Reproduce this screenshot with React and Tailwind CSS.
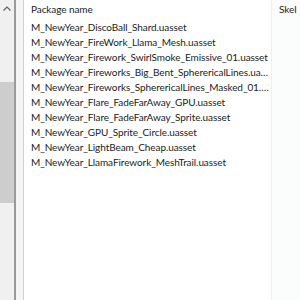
const rows = [
  "M_NewYear_DiscoBall_Shard.uasset",
  "M_NewYear_FireWork_Llama_Mesh.uasset",
  "M_NewYear_Firework_SwirlSmoke_Emissive_01.uasset",
  "M_NewYear_Fireworks_Big_Bent_SpherericalLines.uasset",
  "M_NewYear_Fireworks_SpherericalLines_Masked_01.uasset",
  "M_NewYear_Flare_FadeFarAway_GPU.uasset",
  "M_NewYear_Flare_FadeFarAway_Sprite.uasset",
  "M_NewYear_GPU_Sprite_Circle.uasset",
  "M_NewYear_LightBeam_Cheap.uasset",
  "M_NewYear_LlamaFirework_MeshTrail.uasset",
];

export default function App() {
  return (
    <div
      className="w-[300px] h-[300px] flex bg-white overflow-hidden text-[#1b1b1b]"
      style={{ fontFamily: "Lato, 'Liberation Sans', sans-serif", fontSize: "10px", letterSpacing: "-0.08px" }}
    >
      <div className="w-[14px] shrink-0 bg-[#f0f0f0] flex flex-col">
        <div className="h-[17px] flex items-center justify-center">
          <svg width="8" height="5" viewBox="0 0 8 5">
            <path d="M0.5 4.5 L4 1 L7.5 4.5" fill="none" stroke="#606060" strokeWidth="1.2" />
          </svg>
        </div>
        <div className="h-[65px]" />
        <div className="h-[121px] bg-[#cdcdcd]" />
      </div>
      <div className="w-[2px] shrink-0 bg-[#9a9a9a]" />
      <div className="w-[7px] shrink-0 bg-[#f4f4f4]" />
      <div className="w-px shrink-0 bg-[#cfcfcf]" />
      <div className="w-[247px] shrink-0 flex flex-col pl-[7px]">
        <div className="h-[20px] flex items-center pb-[1px]">Package name</div>
        {rows.map((r) => (
          <div key={r} className="h-[15px] leading-[15px] whitespace-nowrap overflow-hidden text-ellipsis">
            {r}
          </div>
        ))}
      </div>
      <div className="flex-1 border-l border-[#eef0f0] bg-[#fbfcfc] pl-[7px]">
        <div className="h-[20px] flex items-center pb-[1px]">Skel</div>
      </div>
    </div>
  );
}
